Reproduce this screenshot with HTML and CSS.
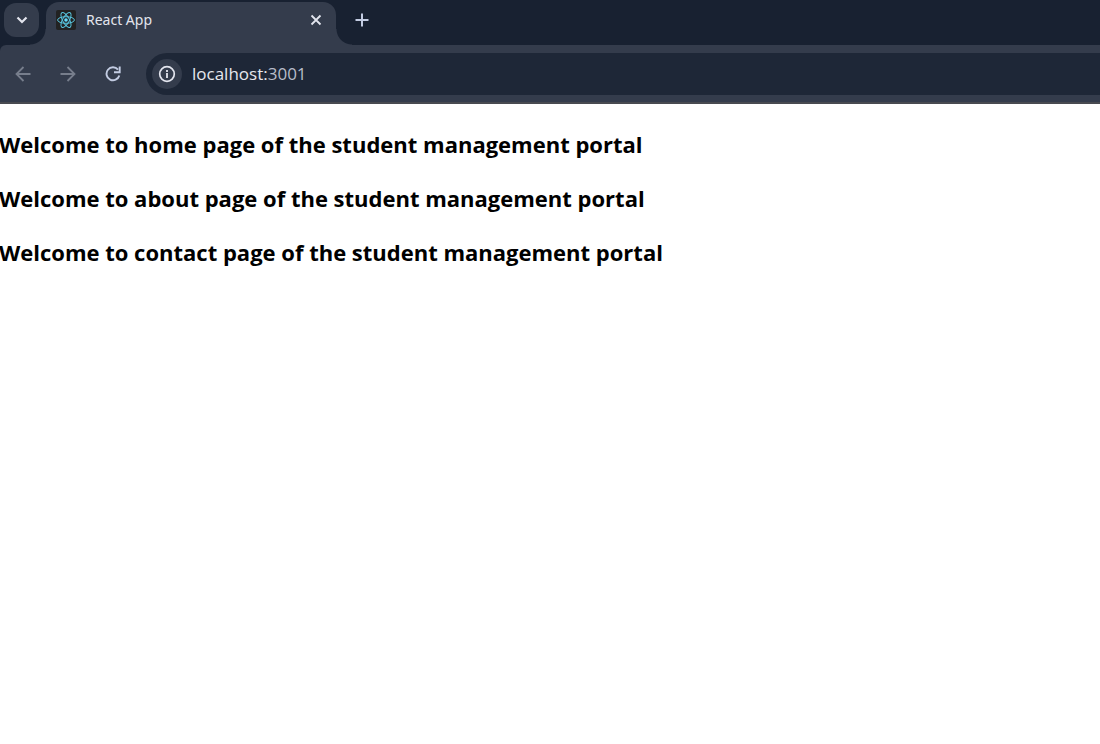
FILE: index.html
```html
<!DOCTYPE html>
<html lang="en">
<head>
<meta charset="utf-8">
<title>React App</title>
<link rel="stylesheet" href="styles.css">
</head>
<body>
<header class="browser">
  <div class="tab-strip">
    <button class="tab-search" aria-label="Search tabs">
      <svg width="12" height="8" viewBox="0 0 12 8"><path d="M1.5 1.5 6 6l4.500-4.500" fill="none" stroke="currentColor" stroke-width="2.200"/></svg>
    </button>
    <div class="tab">
      <svg class="favicon" width="20" height="20" viewBox="0 0 20 20">
        <rect width="20" height="20" rx="2" fill="#222"/>
        <g fill="none" stroke="#58c4dc" stroke-width="1">
          <ellipse cx="10" cy="10" rx="8.400" ry="3.300"/>
          <ellipse cx="10" cy="10" rx="8.400" ry="3.300" transform="rotate(60 10 10)"/>
          <ellipse cx="10" cy="10" rx="8.400" ry="3.300" transform="rotate(120 10 10)"/>
        </g>
        <circle cx="10" cy="10" r="1.800" fill="#61dafb"/>
      </svg>
      <span class="tab-title">React App</span>
      <button class="icon-button tab-close" aria-label="Close tab">
        <svg width="12" height="12" viewBox="0 0 12 12"><path d="m1.500 1.500 9 9m0-9-9 9" stroke="currentColor" stroke-width="1.800"/></svg>
      </button>
    </div>
    <button class="icon-button new-tab" aria-label="New tab">
      <svg width="14" height="14" viewBox="0 0 14 14"><path d="M7 .5v13M.5 7h13" stroke="currentColor" stroke-width="2"/></svg>
    </button>
  </div>
  <div class="toolbar">
    <nav class="nav-buttons">
      <button class="icon-button" aria-label="Back" disabled>
        <svg width="16" height="16" viewBox="0 0 16 16"><path d="M15.500 8H2M8.500 1 1.500 8l7 7" fill="none" stroke="currentColor" stroke-width="1.800"/></svg>
      </button>
      <button class="icon-button" aria-label="Forward" disabled>
        <svg width="16" height="16" viewBox="0 0 16 16"><path d="M.5 8H14M7.500 1l7 7-7 7" fill="none" stroke="currentColor" stroke-width="1.800"/></svg>
      </button>
      <button class="icon-button" aria-label="Reload">
        <svg width="16" height="16" viewBox="0 0 16 16"><path d="M13 3.600A6.500 6.500 0 1 0 14.300 9.500M14.700 .5v5.700H9" fill="none" stroke="currentColor" stroke-width="1.900"/></svg>
      </button>
    </nav>
    <div class="address-bar">
      <button class="site-info" aria-label="View site information">
        <svg width="18" height="18" viewBox="0 0 18 18"><circle cx="9" cy="9" r="7.300" fill="none" stroke="currentColor" stroke-width="1.700"/><path d="M9 8v5M9 5v2" stroke="currentColor" stroke-width="1.800"/></svg>
      </button>
      <a class="url" href="#">localhost:<span class="port">3001</span></a>
    </div>
  </div>
</header>
<main class="page">
  <h2>Welcome to home page of the student management portal</h2>
  <h2>Welcome to about page of the student management portal</h2>
  <h2>Welcome to contact page of the student management portal</h2>
</main>
</body>
</html>
```
FILE: styles.css
```css
body {
  margin: 0;
  background: #fff;
  color: #000;
  font-family: "Segoe UI", "Open Sans", "Noto Sans", sans-serif;
}

button {
  margin: 0;
  padding: 0;
  border: 0;
  background: none;
  color: inherit;
}

.browser {
  overflow: hidden;
  background: #182131;
}

.tab-strip {
  display: flex;
  align-items: flex-start;
  height: 45px;
  color: #e3e5ee;
}

.tab-search {
  display: grid;
  place-items: center;
  width: 35px;
  height: 34px;
  margin: 3px 7px 0 4px;
  border-radius: 12px;
  background: #343c4c;
}

.tab {
  position: relative;
  box-sizing: border-box;
  display: flex;
  align-items: center;
  width: 290px;
  height: 43px;
  margin-top: 2px;
  padding: 0 14px 7px 10px;
  border-radius: 13px 13px 0 0;
  background: #343c4c;
}

/* Concave feet joining the active tab to the toolbar. */
.tab::before,
.tab::after {
  content: "";
  position: absolute;
  bottom: 0;
  z-index: -1;
  width: 16px;
  height: 16px;
}

.tab {
  z-index: 0;
}

.tab::before {
  right: 100%;
  background: radial-gradient(circle at 0 0, transparent 15px, #343c4c 16px);
}

.tab::after {
  left: 100%;
  background: radial-gradient(circle at 100% 0, transparent 15px, #343c4c 16px);
}

.tab-title {
  flex: 1;
  margin-left: 10px;
  font-family: "Segoe UI", "Noto Sans", sans-serif;
  font-size: 14px;
  line-height: 20px;
}

.icon-button {
  display: grid;
  place-items: center;
  width: 16px;
  height: 16px;
  color: #c3cce2;
}

.icon-button:disabled {
  color: #777e8c;
}

.tab-close {
  width: 12px;
  color: #e3e5ee;
}

.new-tab {
  margin: 12px 0 0 18px;
}

.toolbar {
  display: flex;
  align-items: center;
  gap: 25px;
  padding: 8px 0 7px 15px;
  border-bottom: 2px solid #484a50;
  border-top-left-radius: 6px;
  background: #343c4c;
}

.nav-buttons {
  display: flex;
  gap: 29px;
}

.address-bar {
  flex: 1;
  display: flex;
  align-items: center;
  gap: 10px;
  height: 42px;
  padding-left: 6px;
  border-radius: 21px 0 0 21px;
  background: #1e2737;
}

.site-info {
  display: grid;
  place-items: center;
  width: 30px;
  height: 30px;
  border-radius: 50%;
  background: #343c4c;
  color: #e3e5ee;
}

.url {
  color: #e6e8ee;
  font-size: 17px;
  line-height: 24px;
  text-decoration: none;
}

.port {
  color: #b8bdc9;
}

.page {
  padding-top: 1px;
}

.page h2 {
  margin: 24px 0 24px -1px;
  font-size: 22px;
  font-weight: 700;
  line-height: 30px;
}
```
